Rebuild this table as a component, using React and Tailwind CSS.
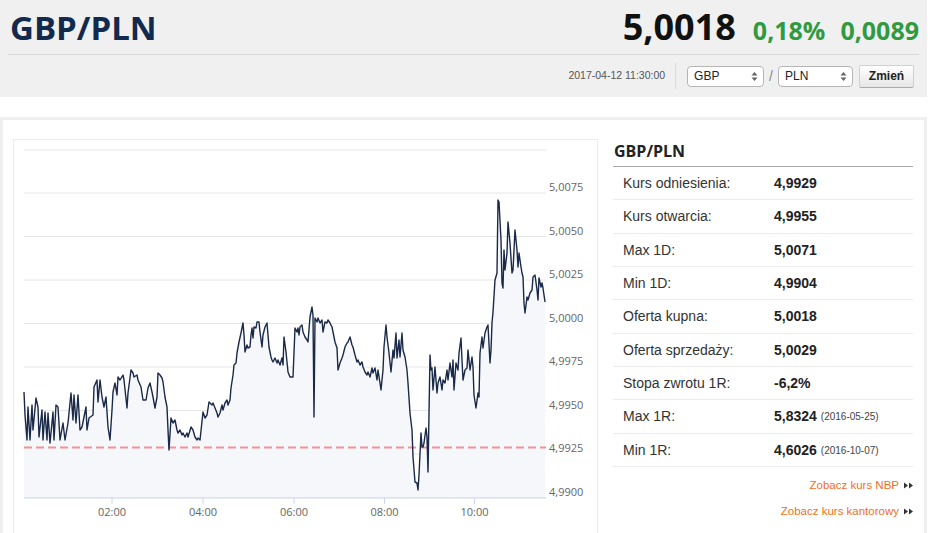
import React from 'react';

const pts = [
  [24,392],[25,415],[27,440],[28,407],[30,440],[32,405],[33,430],[36,398],[38,407],[39,437],[42,410],[43,440],[45,412],[47,440],[48,413],[50,443],[53,412],[54,440],[56,405],[58,407],[60,440],[63,423],[65,440],[68,423],[71,393],[73,420],[74,395],[76,423],[78,395],[80,430],[82,427],[86,407],[87,430],[89,418],[93,415],[94,387],[97,380],[98,402],[100,380],[102,397],[104,407],[106,397],[108,427],[110,440],[112,410],[113,392],[115,383],[117,395],[118,377],[120,380],[123,375],[124,380],[127,408],[128,393],[131,370],[133,373],[134,377],[137,375],[138,380],[141,387],[143,400],[146,400],[148,388],[150,383],[152,392],[153,397],[155,408],[157,397],[158,373],[160,375],[162,378],[163,382],[165,397],[167,407],[168,430],[169,450],[171,418],[173,423],[175,420],[177,430],[178,433],[180,430],[182,435],[183,433],[185,437],[187,433],[188,437],[191,427],[193,430],[195,437],[197,440],[198,438],[200,440],[203,412],[205,418],[207,415],[209,402],[212,405],[213,403],[215,408],[217,413],[218,417],
  [220,413],[222,405],[223,410],[225,403],[227,400],[228,405],[230,400],[231,388],[233,375],[234,365],[236,363],[237,353],[239,342],[241,333],[243,323],[244,335],[245,352],[247,345],[248,348],[250,347],[251,335],[252,328],[253,338],[254,327],[256,328],[257,322],[259,322],[260,332],[262,347],[263,335],[265,327],[267,323],[268,335],[269,347],[271,357],[272,360],[273,362],[275,358],[277,363],[278,360],[280,365],[282,358],[283,365],[284,337],[286,352],[287,362],[288,372],[290,377],[293,377],[295,328],[297,332],[298,328],[299,335],
  [300,327],[302,325],[303,332],[305,337],[307,340],[308,342],[310,317],[312,307],[313,315],[314,417],[315,318],[317,322],[318,318],[320,323],[322,320],[323,332],[325,322],[327,323],[328,320],[330,323],[332,327],[333,332],[335,342],[337,348],[338,370],[340,363],[342,358],[343,355],[345,347],[347,343],[348,342],[350,337],[352,345],[353,347],[355,355],[357,362],[358,360],[360,365],[362,362],[363,367],[365,372],[367,375],[368,372],[370,377],[372,368],[373,373],[375,368],[377,380],[378,370],[380,383],[381,390],[383,370],[384,347],[386,325],[387,337],[389,353],[391,372],[393,350],[394,358],[396,333],[397,358],[399,340],[400,357],[402,333],[403,350],[405,357],[407,370],[408,383],[410,413],[412,430],[413,457],[415,482],[417,483],[418,490],[419,475],[421,433],[422,447],[423,447],[424,443],[426,428],[427,437],[428,472],[430,355],[431,370],[432,368],[433,390],[435,367],[437,393],[438,383],[440,377],[442,390],[443,380],[445,383],[447,370],[448,380],[450,363],[452,377],[453,360],[454,390],[456,363],[458,370],[459,353],[461,338],[462,360],[463,380],[465,370],[467,368],[468,350],[470,370],[472,357],[473,367],[474,395],[476,408],[478,393],[479,397],[480,353],[482,337],[483,348],[485,333],[487,327],[488,325],[490,363],[491,350],[492,323],[493,312],
  [495,280],[497,273],[498,200],[499,202],[501,240],[502,283],[503,288],[504,250],[505,270],[507,253],[508,222],[510,243],[512,273],[513,270],[515,230],[517,250],[518,267],[519,253],[521,267],[522,273],[523,277],[524,303],[525,313],[527,297],[528,300],[530,293],[532,290],[533,277],[535,275],[537,290],[538,300],[539,278],[541,287],[542,283],[543,288],[545,302],
];

const grid = [150, 193, 236.5, 280, 323.5, 367, 410.5, 454, 497.5];
const yLabels = [
  ['5,0075', 193], ['5,0050', 236.5], ['5,0025', 280], ['5,0000', 323.5],
  ['4,9975', 367], ['4,9950', 410.5], ['4,9925', 454], ['4,9900', 497.5],
];
const xTicks = [['02:00', 112], ['04:00', 203], ['06:00', 294], ['08:00', 384.5], ['10:00', 474.5]];

const rows = [
  { label: 'Kurs odniesienia:', value: '4,9929' },
  { label: 'Kurs otwarcia:', value: '4,9955' },
  { label: 'Max 1D:', value: '5,0071' },
  { label: 'Min 1D:', value: '4,9904' },
  { label: 'Oferta kupna:', value: '5,0018' },
  { label: 'Oferta sprzedaży:', value: '5,0029' },
  { label: 'Stopa zwrotu 1R:', value: '-6,2%' },
  { label: 'Max 1R:', value: '5,8324', date: '(2016-05-25)' },
  { label: 'Min 1R:', value: '4,6026', date: '(2016-10-07)' },
];

function UpDown() {
  return (
    <svg width="7" height="11" viewBox="0 0 7 11" className="shrink-0">
      <path d="M3.5 1 L6.5 4.5 L0.5 4.5 Z" fill="#666" />
      <path d="M3.5 10 L6.5 6.5 L0.5 6.5 Z" fill="#666" />
    </svg>
  );
}

function DoubleArrow() {
  return (
    <svg width="9" height="7" viewBox="0 0 9 7" className="ml-[5px] shrink-0">
      <path d="M0 0.5 L4 3.5 L0 6.5 Z" fill="#333" />
      <path d="M5 0.5 L9 3.5 L5 6.5 Z" fill="#333" />
    </svg>
  );
}

function Chart() {
  const line = pts.map((p, i) => `${i ? 'L' : 'M'}${p[0]} ${p[1]}`).join(' ');
  const area = `${line} L545 497.5 L24 497.5 Z`;
  return (
    <svg width="583" height="410" viewBox="14 140 583 410" className="block">
      {grid.map((y) => (
        <line key={y} x1="24" x2="546" y1={y} y2={y} stroke="#e6e6e6" strokeWidth="1" />
      ))}
      <path d={area} fill="#f5f7fa" />
      <line x1="24" x2="546" y1="447.5" y2="447.5" stroke="#f29494" strokeWidth="2" strokeDasharray="8 4" />
      <path d={line} fill="none" stroke="#1a2948" strokeWidth="1.4" strokeLinejoin="round" />
      <line x1="24" x2="546" y1="498" y2="498" stroke="#ccd6eb" strokeWidth="1" />
      {xTicks.map(([t, x]) => (
        <g key={t}>
          <line x1={x} x2={x} y1="498" y2="504" stroke="#ccd6eb" strokeWidth="1" />
          <text x={x} y="516" textAnchor="middle" fill="#666" fontSize="11" fontFamily="'Open Sans', sans-serif">{t}</text>
        </g>
      ))}
      {yLabels.map(([t, y]) => (
        <text key={t} x="549" y={y - 2} fill="#666" fontSize="11" fontFamily="'Open Sans', sans-serif">{t}</text>
      ))}
    </svg>
  );
}

export default function App() {
  return (
    <div className="w-[945px] bg-white font-['Liberation_Sans',Arial,sans-serif] text-[#333]">
      <div className="w-[927px] h-[97px] bg-[#f0f0f0] px-[8px]">
        <div className="h-[55px] border-b border-[#d6d6d6] flex items-center justify-between pl-[2px]">
          <h1 className="font-['Open_Sans',sans-serif] font-bold text-[33px] text-[#112a4d] leading-none">GBP/PLN</h1>
          <div className="flex items-baseline font-['Open_Sans',sans-serif] font-bold">
            <span className="text-[36px] text-[#111] leading-none">5,0018</span>
            <span className="text-[25px] text-[#2f9a3f] leading-none ml-[17px]">0,18%</span>
            <span className="text-[25px] text-[#2f9a3f] leading-none ml-[15px]">0,0089</span>
          </div>
        </div>
        <div className="h-[42px] flex items-center justify-end pr-[5px]">
          <span className="text-[10.5px] text-[#555]">2017-04-12 11:30:00</span>
          <div className="w-px h-[26px] bg-[#dcdcdc] ml-[10px] mr-[11px]" />
          <div className="w-[77px] h-[21px] bg-white border border-[#b5b5b5] rounded-[4px] flex items-center justify-between pl-[6px] pr-[5px] text-[12px] text-[#222]">
            <span>GBP</span>
            <UpDown />
          </div>
          <span className="mx-[5px] text-[14px] text-[#888]">/</span>
          <div className="w-[75px] h-[21px] bg-white border border-[#b5b5b5] rounded-[4px] flex items-center justify-between pl-[6px] pr-[5px] text-[12px] text-[#222]">
            <span>PLN</span>
            <UpDown />
          </div>
          <button type="button" className="ml-[6px] w-[55px] h-[23px] bg-gradient-to-b from-white to-[#e6e6e6] border border-[#d0d0d0] border-b-[#aaa] rounded-[2px] text-[12px] font-bold text-[#222]">
            Zmień
          </button>
        </div>
      </div>

      <div className="mt-[20px] w-[927px] h-[416px] border-[3px] border-b-0 border-[#efefef] pl-[10px] pt-[19px] pr-[11px] flex gap-[15px]">
        <div className="w-[585px] h-[420px] border border-[#ececec] shrink-0 overflow-hidden">
          <Chart />
        </div>
        <div className="w-[300px] shrink-0">
          <div className="h-[28px] border-b border-[#a8a8a8] flex items-center pb-[4px] pl-[1px]">
            <h2 className="font-['Open_Sans',sans-serif] font-bold text-[16px] text-[#222]">GBP/PLN</h2>
          </div>
          {rows.map((r) => (
            <div key={r.label} className="h-[33.33px] border-b border-[#ececec] flex items-center text-[14px] pt-[1px]">
              <span className="w-[161px] pl-[10px] text-[#333]">{r.label}</span>
              <span className="font-bold text-[#222]">{r.value}</span>
              {r.date && <span className="ml-[4px] text-[10px] text-[#444]">{r.date}</span>}
            </div>
          ))}
          <div className="flex flex-col items-end text-[11.5px] text-[#f36f21] mt-[12px] gap-[12px]">
            <a className="flex items-center h-[14px]">Zobacz kurs NBP<DoubleArrow /></a>
            <a className="flex items-center h-[14px]">Zobacz kurs kantorowy<DoubleArrow /></a>
          </div>
        </div>
      </div>
    </div>
  );
}
